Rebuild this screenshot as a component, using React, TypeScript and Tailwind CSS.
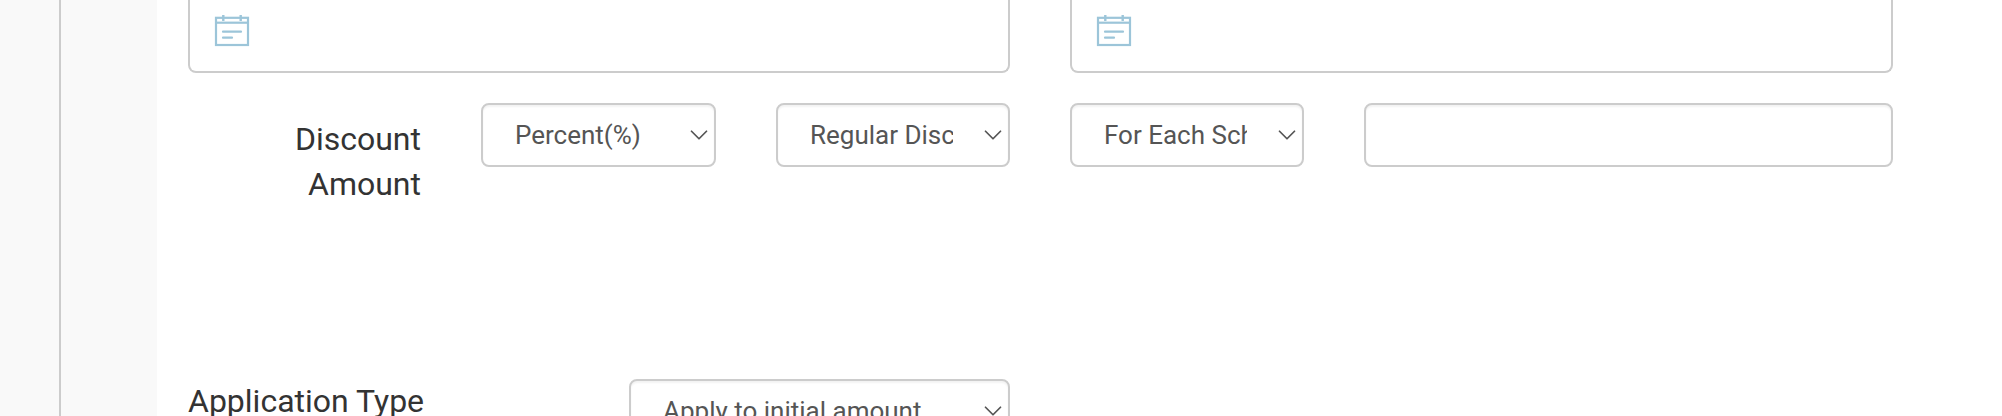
import { ChevronDown } from "lucide-react";

function CalendarIcon() {
	return (
		<svg
			className="block h-[36px] w-[37px]"
			fill="none"
			stroke="#9cc5d9"
			strokeWidth="2.2"
			viewBox="0 0 37 36"
		>
			<rect height="27.2" width="32" x="2" y="4.8" />
			<path d="M2 9.700h32" />
			<path d="M9.300 2v6M26.700 2v6" strokeWidth="2.400" />
			<path d="M9 18.700h18M9 24.700h9" strokeLinecap="round" strokeWidth="2.200" />
		</svg>
	);
}

function DateField() {
	return (
		<div className="h-[73px] rounded-b-lg border-x-2 border-b-2 border-[#cccccc] bg-white pt-[13px] pl-6">
			<CalendarIcon />
		</div>
	);
}

function SelectField({ value }: { value: string }) {
	return (
		<div className="relative h-[64px]">
			<select
				className="h-full w-full appearance-none rounded-lg border-2 border-[#cccccc] bg-white pr-[55px] pl-[32px] text-[26px] text-[#555555] shadow-[inset_0_2px_2px_rgba(0,0,0,0.05)]"
				defaultValue={value}
			>
				<option>{value}</option>
			</select>
			<ChevronDown
				className="absolute top-[17px] right-[2px] h-[30px] w-[30px] text-[#555555]"
				strokeWidth={1.4}
			/>
		</div>
	);
}

export default function App() {
	return (
		<div className="flex h-[416px] overflow-hidden bg-white font-['Roboto',sans-serif]">
			<div className="w-[157px] shrink-0 bg-[#f9f9f9]">
				<div className="h-full w-[61px] border-r-2 border-[#cccccc]" />
			</div>
			<div className="flex-1 pr-[109px] pl-[31px]">
				<div className="grid grid-cols-[822px_1fr] gap-x-[60px]">
					<DateField />
					<DateField />
				</div>

				<div className="mt-[30px] grid grid-cols-[233px_235px_234px_234px_1fr] items-start gap-x-[60px]">
					<div className="mt-[14px] text-right text-[32px] leading-[45px] text-[#333333]">
						Discount
						<br />
						Amount
					</div>
					<SelectField value="Percent(%)" />
					<SelectField value="Regular Discount" />
					<SelectField value="For Each Schedule" />
					<input
						className="h-[64px] w-full rounded-lg border-2 border-[#cccccc] bg-white shadow-[inset_0_2px_2px_rgba(0,0,0,0.05)]"
						type="text"
					/>
				</div>

				<div className="mt-[172px] grid grid-cols-[822px_1fr] gap-x-[60px]">
					<div className="flex items-start justify-between">
						<div className="text-[32px] leading-[45px] text-[#333333]">
							Application Type
						</div>
						<div className="w-[381px]">
							<SelectField value="Apply to initial amount" />
						</div>
					</div>
				</div>
			</div>
		</div>
	);
}
